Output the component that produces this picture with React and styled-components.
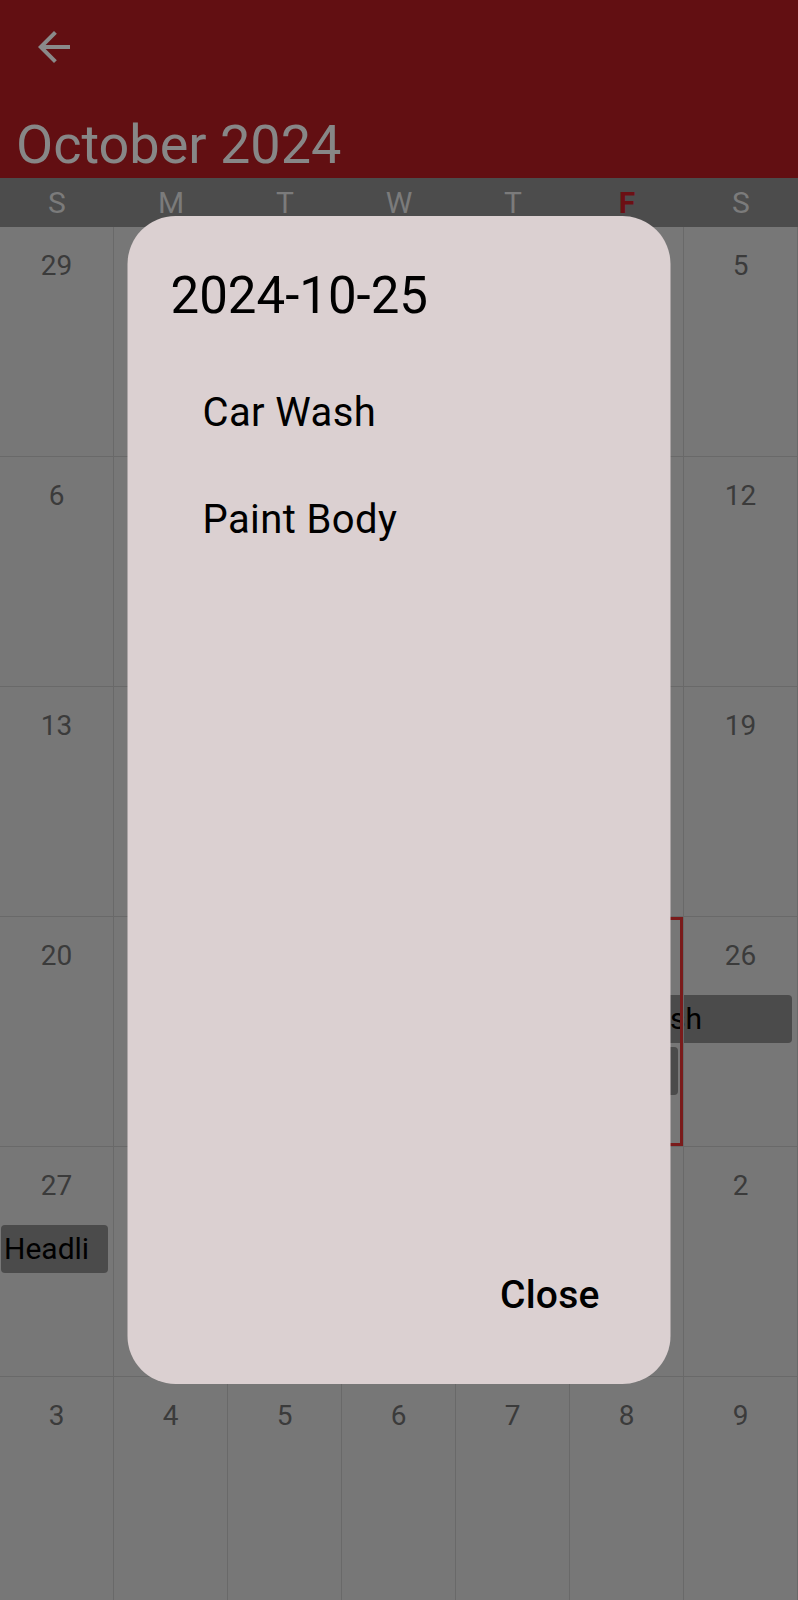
import React from "react";
import styled, { createGlobalStyle } from "styled-components";

const GlobalStyle = createGlobalStyle`
  html, body {
    margin: 0;
    padding: 0;
    background: #777777;
    font-family: Roboto, "Liberation Sans", sans-serif;
  }
  * { box-sizing: border-box; }
`;

const Page = styled.div`
  width: 798px;
  height: 1600px;
  overflow: hidden;
  background: #777777;
`;

const AppBar = styled.header`
  background: #620f12;
  height: 178px;
  display: flex;
  flex-direction: column;
`;

const Toolbar = styled.div`
  height: 94px;
  display: flex;
  align-items: center;
  padding-left: 30px;
`;

const BackIcon = styled.svg`
  width: 48px;
  height: 48px;
  fill: #8a8a8a;
`;

const Title = styled.h1`
  margin: 20px 0 0 16px;
  font-size: 54px;
  font-weight: 400;
  line-height: 62px;
  color: #878787;
`;

const WeekdayBar = styled.div`
  display: grid;
  grid-template-columns: repeat(7, 1fr);
  height: 49px;
  background: #4c4c4c;
`;

const Weekday = styled.span`
  text-align: center;
  font-size: 30px;
  line-height: 49px;
  color: ${(p) => (p.$today ? "#6c1014" : "#7b7b7b")};
  font-weight: ${(p) => (p.$today ? 700 : 400)};
`;

const Week = styled.div`
  display: grid;
  grid-template-columns: repeat(7, 1fr);
  grid-template-rows: 78px 48px 4px 48px 1fr;
  height: 230px;
`;

const DayCell = styled.div`
  grid-row: 1 / -1;
  grid-column: ${(p) => p.$col + 1};
  border-right: 1px solid #696969;
  border-bottom: 1px solid #696969;
  padding-top: 22px;
  text-align: center;
  font-size: 28px;
  color: #3b3b3b;
  box-shadow: ${(p) => (p.$selected ? "inset 0 0 0 3px #7a1b1b" : "none")};
  z-index: ${(p) => (p.$selected ? 1 : 0)};
`;

const Chip = styled.div`
  grid-row: ${(p) => (p.$lane === 1 ? 2 : 4)};
  grid-column: ${(p) => `${p.$col + 1} / span ${p.$span}`};
  margin: 0 6px 0 1px;
  padding-left: 3px;
  background: #4b4b4b;
  border-radius: 4px;
  font-size: 30px;
  line-height: 48px;
  color: #000;
  white-space: nowrap;
  overflow: hidden;
`;

const Dialog = styled.div`
  position: fixed;
  left: 50%;
  top: 50%;
  transform: translate(-50%, -50%);
  width: 543px;
  height: 1168px;
  background: #dbd0d1;
  border-radius: 48px;
  padding: 50px 47px 58px 43px;
  display: flex;
  flex-direction: column;
  z-index: 10;
`;

const DialogTitle = styled.h2`
  margin: 0;
  font-size: 51px;
  font-weight: 400;
  line-height: 60px;
  color: #000;
`;

const EventList = styled.ul`
  list-style: none;
  margin: 33px 0 0;
  padding: 0 0 0 32px;
  flex: 1;
`;

const EventItem = styled.li`
  height: 107px;
  line-height: 107px;
  font-size: 40px;
  letter-spacing: 0.4px;
  color: #000;
`;

const Footer = styled.div`
  display: flex;
  justify-content: flex-end;
`;

const CloseButton = styled.button`
  border: none;
  background: transparent;
  padding: 8px 24px;
  font-family: Roboto, "Liberation Sans", sans-serif;
  font-size: 39px;
  font-weight: 500;
  line-height: 46px;
  letter-spacing: 0.2px;
  color: #000;
  cursor: pointer;
`;

const weekdays = ["S", "M", "T", "W", "T", "F", "S"];

const weeks = [
  [29, 30, 1, 2, 3, 4, 5],
  [6, 7, 8, 9, 10, 11, 12],
  [13, 14, 15, 16, 17, 18, 19],
  [20, 21, 22, 23, 24, 25, 26],
  [27, 28, 29, 30, 31, 1, 2],
  [3, 4, 5, 6, 7, 8, 9],
];

const events = [
  { week: 3, col: 5, span: 2, lane: 1, label: "Car Wash" },
  { week: 3, col: 5, span: 1, lane: 2, label: "Paint" },
  { week: 4, col: 0, span: 1, lane: 1, label: "Headli" },
];

export default function App() {
  return (
    <Page>
      <GlobalStyle />
      <AppBar>
        <Toolbar>
          <BackIcon viewBox="0 0 24 24">
            <path d="M20 11H7.83l5.59-5.59L12 4l-8 8 8 8 1.41-1.41L7.83 13H20v-2z" />
          </BackIcon>
        </Toolbar>
        <Title>October 2024</Title>
      </AppBar>
      <WeekdayBar>
        {weekdays.map((d, i) => (
          <Weekday key={i} $today={i === 5}>{d}</Weekday>
        ))}
      </WeekdayBar>
      {weeks.map((days, w) => (
        <Week key={w}>
          {days.map((d, c) => (
            <DayCell key={c} $col={c} $selected={w === 3 && c === 5}>
              {d}
            </DayCell>
          ))}
          {events
            .filter((e) => e.week === w)
            .map((e, i) => (
              <Chip key={i} $col={e.col} $span={e.span} $lane={e.lane}>
                {e.label}
              </Chip>
            ))}
        </Week>
      ))}
      <Dialog>
        <DialogTitle>2024-10-25</DialogTitle>
        <EventList>
          <EventItem>Car Wash</EventItem>
          <EventItem>Paint Body</EventItem>
        </EventList>
        <Footer>
          <CloseButton>Close</CloseButton>
        </Footer>
      </Dialog>
    </Page>
  );
}
